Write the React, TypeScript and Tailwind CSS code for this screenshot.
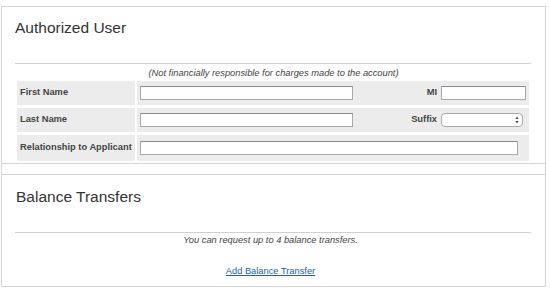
import React from "react";

const Input = ({ w }: { w: string }) => (
  <div className={`${w} h-[14px] bg-white border border-[#a8a8a8] border-t-[#8c8c8c] shrink-0`} />
);

export default function App() {
  return (
    <div className="w-[550px] h-[292px] bg-white overflow-hidden font-['Liberation_Sans',Arial,sans-serif] pt-[6px] pl-[1px]">
      <div className="w-[545px] border border-[#d4d4d4]">
        {/* Authorized User */}
        <div className="h-[56px] pl-[13px] pt-[12px] text-[15.5px] leading-[18px] text-[#333]">
          Authorized User
        </div>
        <div className="ml-[13px] mr-[14px] h-px bg-[#cfcfcf]" />
        <div className="h-[4px]" />
        <div className="text-center italic text-[9.3px] leading-[11px] text-[#444]">
          (Not financially responsible for charges made to the account)
        </div>
        <div className="ml-[15px] mr-[16px] mt-[2px] flex flex-col gap-[3px]">
          <div className="flex gap-[2px] h-[24px]">
            <div className="w-[118px] bg-[#ececec] flex items-center pl-[3px] font-bold text-[9.3px] text-[#444]">
              First Name
            </div>
            <div className="flex-1 bg-[#ececec] flex items-center pl-[3px] pr-[3px]">
              <Input w="w-[213px]" />
              <div className="flex-1 text-right pr-[4px] font-bold text-[9.3px] text-[#444]">MI</div>
              <Input w="w-[85px]" />
            </div>
          </div>
          <div className="flex gap-[2px] h-[24px]">
            <div className="w-[118px] bg-[#ececec] flex items-center pl-[3px] font-bold text-[9.3px] text-[#444]">
              Last Name
            </div>
            <div className="flex-1 bg-[#ececec] flex items-center pl-[3px] pr-[6px]">
              <Input w="w-[213px]" />
              <div className="flex-1 text-right pr-[4px] font-bold text-[9.3px] text-[#444]">Suffix</div>
              <div className="w-[82px] h-[14px] bg-white border border-[#a8a8a8] rounded-[4px] flex items-center justify-end pr-[3px] shrink-0">
                <svg width="4" height="8" viewBox="0 0 4 8">
                  <path d="M2 0.5 L3.6 3 L0.4 3 Z" fill="#444" />
                  <path d="M2 7.5 L3.6 5 L0.4 5 Z" fill="#444" />
                </svg>
              </div>
            </div>
          </div>
          <div className="flex gap-[2px] h-[26px]">
            <div className="w-[118px] bg-[#ececec] flex items-center pl-[3px] font-bold text-[9.3px] text-[#444]">
              Relationship to Applicant
            </div>
            <div className="flex-1 bg-[#ececec] flex items-center pl-[3px]">
              <Input w="w-[378px]" />
            </div>
          </div>
        </div>
        <div className="h-[2px]" />
        <div className="h-[11px] border-t border-[#d4d4d4]" />
        {/* Balance Transfers */}
        <div className="border-t border-[#d4d4d4] pr-[6px]">
          <div className="h-[57px] pl-[14px] pt-[13px] text-[15.5px] leading-[18px] text-[#333]">
            Balance Transfers
          </div>
          <div className="ml-[13px] mr-[8px] h-px bg-[#cfcfcf]" />
          <div className="mt-[2px] text-center italic text-[9.3px] leading-[11px] text-[#444]">
            You can request up to 4 balance transfers.
          </div>
          <div className="mt-[20px] pb-[9px] text-center text-[9.3px] leading-[11px]">
            <a className="text-[#2160b0] underline">Add Balance Transfer</a>
          </div>
        </div>
      </div>
    </div>
  );
}
